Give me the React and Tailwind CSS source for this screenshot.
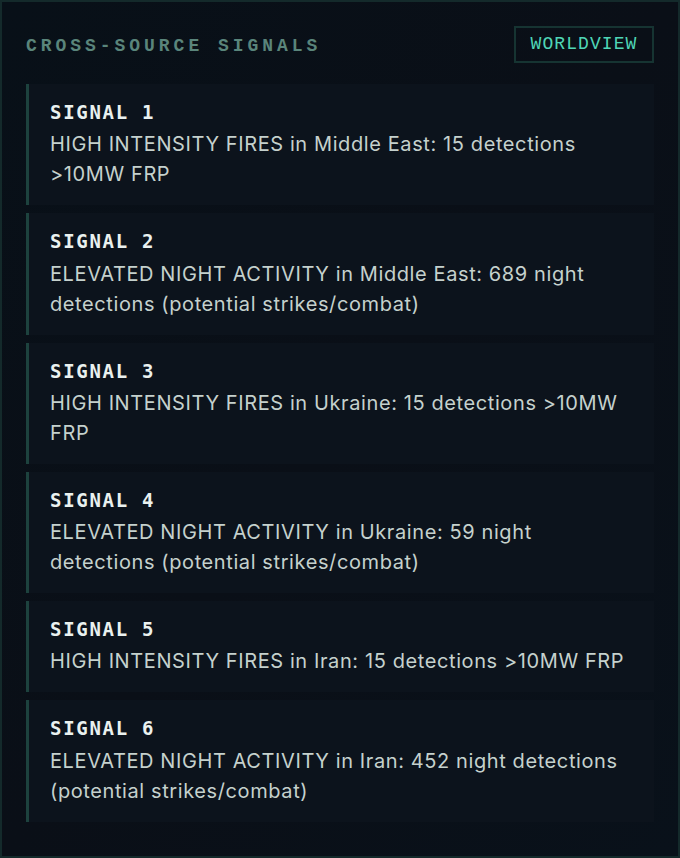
import React from 'react';

const signals = [
    'HIGH INTENSITY FIRES in Middle East: 15 detections >10MW FRP',
    'ELEVATED NIGHT ACTIVITY in Middle East: 689 night detections (potential strikes/combat)',
    'HIGH INTENSITY FIRES in Ukraine: 15 detections >10MW FRP',
    'ELEVATED NIGHT ACTIVITY in Ukraine: 59 night detections (potential strikes/combat)',
    'HIGH INTENSITY FIRES in Iran: 15 detections >10MW FRP',
    'ELEVATED NIGHT ACTIVITY in Iran: 452 night detections (potential strikes/combat)',
];

const mono = { fontFamily: '"DejaVu Sans Mono", "Liberation Mono", monospace' };

export default function App() {
    return (
        <div className="w-[680px] h-[858px] bg-[#060b12]">
            <div className="h-[858px] border-2 border-[#142a2b] bg-gradient-to-br from-[#081018] via-[#0a0f17] to-[#09111a] px-6 pt-6 pb-8 flex flex-col">
                {/* Header */}
                <div className="flex items-center justify-between h-[37px] mb-[21px]">
                    <h2 className="pt-[3px] font-['Liberation_Mono',monospace] text-[18px] font-bold tracking-[0.22em] text-[#5a857b]">
                        CROSS-SOURCE SIGNALS
                    </h2>
                    <span className="h-[37px] w-[140px] flex items-center justify-center border-2 border-[#163432] font-['Liberation_Mono',monospace] text-[18px] tracking-[0.06em] text-[#4fd6b6]">
                        WORLDVIEW
                    </span>
                </div>

                {/* Signals */}
                <div className="flex flex-col gap-2">
                    {signals.map((s, i) => (
                        <div key={i} className="bg-[#0c131c] border-l-[3px] border-[#1d423e] pl-[21px] pr-5 pt-[15px] pb-4">
                            <div className="text-[19px] leading-[27.3px] font-bold tracking-[0.09em] text-[#eaf1ef]" style={mono}>
                                SIGNAL {i + 1}
                            </div>
                            <p className="mt-[3px] font-['Inter',sans-serif] text-[20px] leading-[30px] tracking-[0.03em] text-[#c5d1cd]">
                                {s}
                            </p>
                        </div>
                    ))}
                </div>
            </div>
        </div>
    );
}
